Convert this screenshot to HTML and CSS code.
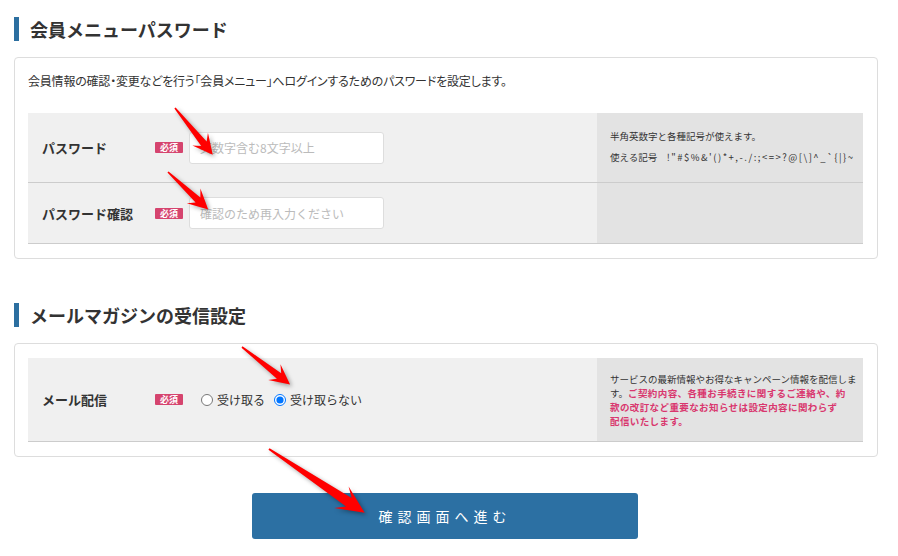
FILE: index.html
```html
<!DOCTYPE html>
<html lang="ja">
<head>
  <meta charset="UTF-8">
  <meta name="viewport" content="width=device-width, initial-scale=1.0">
  <title>会員情報変更</title>
  <link rel="stylesheet" href="styles.css">
</head>
<body>
  <div class="page">
    <!-- パスワード -->
    <h2 class="sec-title">会員メニューパスワード</h2>
    <div class="box">
      <p class="lead">会員情報の確認・変更などを行う「会員メニュー」へログインするためのパスワードを設定します。</p>
      <div class="row">
        <div class="cell">
          <span class="label">パスワード</span>
          <span class="req">必須</span>
          <input type="password" class="text" placeholder="英数字含む8文字以上">
        </div>
        <div class="note">
          <p>半角英数字と各種記号が使えます。</p>
          <p>使える記号　<span class="symbols">!"#$%&amp;'()*+,-./:;&lt;=&gt;?@[\]^_`{|}~</span></p>
        </div>
      </div>
      <div class="row">
        <div class="cell">
          <span class="label">パスワード確認</span>
          <span class="req">必須</span>
          <input type="password" class="text" placeholder="確認のため再入力ください">
        </div>
        <div class="note"></div>
      </div>
    </div>

    <!-- メルマガ -->
    <h2 class="sec-title sec-second">メールマガジンの受信設定</h2>
    <div class="box box-mail">
      <div class="row">
        <div class="cell">
          <span class="label">メール配信</span>
          <span class="req">必須</span>
          <div class="radios">
            <label><input type="radio" name="mail">受け取る</label>
            <label><input type="radio" name="mail" checked>受け取らない</label>
          </div>
        </div>
        <div class="note note-mail">
          サービスの最新情報やお得なキャンペーン情報を配信しま<br>す。<strong>ご契約内容、各種お手続きに関するご連絡や、約<br>款の改訂など重要なお知らせは設定内容に関わらず<br>配信いたします。</strong>
        </div>
      </div>
    </div>

    <div class="actions">
      <button class="submit">確認画面へ進む</button>
    </div>
  </div>

  <!-- 注釈の矢印 -->
  <svg class="arrows" width="898" height="556" viewBox="0 0 898 556">
    <g transform="translate(175 108) rotate(51)">
      <path d="M0,-0.8 L46,-3.5 L40,-10 L60,0 L40,10 L46,3.5 L0,0.8 Z"/>
    </g>
    <g transform="translate(168 172) rotate(43)">
      <path d="M0,-0.8 L41,-3.5 L35,-10 L55,0 L35,10 L41,3.5 L0,0.8 Z"/>
    </g>
    <g transform="translate(242 347) rotate(38)">
      <path d="M0,-0.8 L47,-3.5 L41,-10 L61,0 L41,10 L47,3.5 L0,0.8 Z"/>
    </g>
    <g transform="translate(269 449) rotate(33.7)">
      <path d="M0,-1 L96,-5 L87,-13 L115,0 L87,13 L96,5 L0,1 Z"/>
    </g>
  </svg>
</body>
</html>
```

FILE: styles.css
```css
* {
  margin: 0;
  padding: 0;
  box-sizing: border-box;
}
body {
  background: #fff;
  color: #333;
  font-family: "Noto Sans CJK JP", "Noto Sans", sans-serif;
  position: relative;
}
.page {
  width: 864px;
  margin-left: 14px;
}
.sec-title {
  margin-top: 17px;
  border-left: 5px solid #2c6fa0;
  padding-left: 11px;
  font-size: 18px;
  line-height: 24px;
  font-weight: bold;
  color: #333;
}
.sec-second {
  margin-top: 44px;
}
.box {
  margin-top: 16px;
  border: 1px solid #ddd;
  border-radius: 4px;
  padding: 14px 14px 14px 13px;
}
.lead {
  font-size: 12px;
  line-height: 17px;
  letter-spacing: -0.2px;
  font-feature-settings: "palt";
  margin-bottom: 24px;
}
.row {
  display: grid;
  grid-template-columns: 569px 1fr;
  border-bottom: 1px solid #ccc;
}
.cell {
  display: flex;
  align-items: center;
  background: #f0f0f0;
  padding: 14px 0 14px 14px;
}
.label {
  width: 113px;
  font-size: 13px;
  font-weight: bold;
}
.req {
  display: inline-block;
  width: 28px;
  height: 11px;
  line-height: 11px;
  margin-right: 6px;
  background: #d5446e;
  color: #fff;
  font-size: 9px;
  font-weight: bold;
  text-align: center;
  border-radius: 1px;
}
.text {
  width: 195px;
  height: 32px;
  border: 1px solid #ddd;
  border-radius: 3px;
  padding: 0 10px;
  font-family: inherit;
  font-size: 12px;
}
.text::placeholder {
  color: #bbb;
}
.note {
  background: #e3e3e3;
  padding: 13px 6px 14px 13px;
  font-size: 9.5px;
  line-height: 21px;
}
.symbols {
  letter-spacing: 1.5px;
}
.note-mail {
  padding: 14px 0 13px 13px;
  line-height: 14px;
  white-space: nowrap;
}
.note-mail strong {
  color: #d9376e;
  letter-spacing: 0.4px;
}
.radios {
  display: flex;
  align-items: center;
  margin-left: 12px;
  font-size: 12px;
}
.radios label {
  display: flex;
  align-items: center;
  gap: 4px;
  margin-right: 9px;
}
.radios input {
  width: 12px;
  height: 12px;
  margin: 0;
}
.actions {
  display: flex;
  justify-content: center;
  margin-top: 36px;
}
.submit {
  width: 386px;
  height: 46px;
  margin-left: -2px;
  background: #2c70a3;
  color: #fff;
  border: none;
  border-radius: 3px;
  font-family: inherit;
  font-size: 14px;
  letter-spacing: 5px;
  cursor: pointer;
}
.arrows {
  position: absolute;
  top: 0;
  left: 0;
  pointer-events: none;
  fill: #ff0000;
  filter: drop-shadow(2px 2px 2px rgba(0, 0, 0, 0.35));
}
```
